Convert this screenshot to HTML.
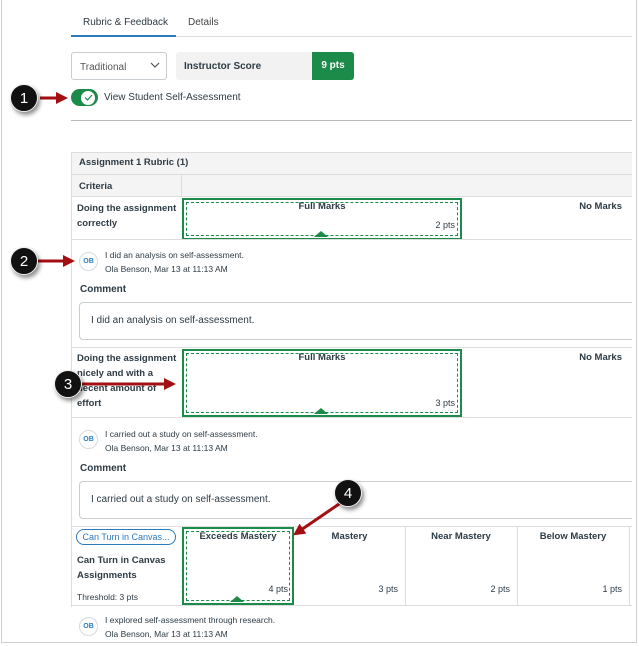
<!DOCTYPE html>
<html><head><meta charset="utf-8"><style>
*{box-sizing:border-box;margin:0;padding:0}
body{width:639px;height:646px;background:#fff;font-family:"Liberation Sans",sans-serif;color:#2d3b45;position:relative;overflow:hidden;font-size:10px}
.a{position:absolute}
.frame{left:1px;top:0;width:636px;height:643px;border:1px solid #cfcfcf;border-top:none}
.b{font-weight:bold}
.line{background:#ddd;height:1px}
.gbox{border:2px solid #1c8a48}
.gbox::after{content:"";position:absolute;left:2px;top:2px;right:2px;bottom:2px;border:1px dashed #1c8a48}
.tri{width:0;height:0;border-left:7px solid transparent;border-right:7px solid transparent;border-bottom:6px solid #1c8a48}
.av{width:19px;height:19px;border-radius:50%;border:1px solid #d5dbe0;color:#2b7abc;font-size:7px;font-weight:bold;text-align:center;line-height:17px}
.cb{border:1px solid #c7cdd1;border-right:none;border-radius:4px 0 0 4px;font-size:10px;padding:12px 0 0 11px}
.call{width:28px;height:28px;border-radius:50%;background:#111;color:#fff;font-size:15px;text-align:center;line-height:28px;box-shadow:2px 3px 4px rgba(0,0,0,.45);border:1.5px solid #eee}
.sm{font-size:8.5px}
</style></head><body>
<div class="a frame"></div>
<!-- tabs -->
<div class="a" style="left:83px;top:17px;font-size:10px">Rubric &amp; Feedback</div>
<div class="a" style="left:188px;top:17px;font-size:10px;color:#444">Details</div>
<div class="a line" style="left:71px;top:36px;width:561px"></div>
<div class="a" style="left:71px;top:35px;width:105px;height:2px;background:#2b7abc"></div>
<!-- controls -->
<div class="a" style="left:71px;top:52px;width:96px;height:28px;border:1px solid #c7cdd1;border-radius:3px;padding:9px 0 0 8px;color:#555">Traditional</div>
<svg class="a" style="left:150px;top:62px" width="10" height="7"><path d="M1 1 L5 5 L9 1" fill="none" stroke="#555" stroke-width="1.2"/></svg>
<div class="a b" style="left:176px;top:52px;width:136px;height:28px;background:#f2f2f2;border-radius:3px 0 0 3px;padding:9px 0 0 8px">Instructor Score</div>
<div class="a b" style="left:312px;top:52px;width:42px;height:28px;background:#1c8a48;color:#fff;border-radius:0 3px 3px 0;text-align:center;line-height:28px">9 pts</div>
<div class="a" style="left:71px;top:89px;width:27px;height:17px;border-radius:9px;background:#1c8a48"></div>
<div class="a" style="left:80px;top:89.5px;width:16px;height:16px;border-radius:50%;background:#fff;border:1px solid #1c8a48"></div>
<svg class="a" style="left:84px;top:94px" width="9" height="7"><path d="M1 3.5 L3.5 6 L8 1" fill="none" stroke="#1c8a48" stroke-width="1.2"/></svg>
<div class="a" style="left:104px;top:92px">View Student Self-Assessment</div>
<div class="a" style="left:71px;top:120px;width:561px;height:1px;background:#bbb"></div>
<!-- table -->
<div class="a" style="left:71px;top:152px;width:561px;height:45px;background:#f4f4f4;border:1px solid #ddd;border-right:none"></div>
<div class="a line" style="left:71px;top:174px;width:561px"></div>
<div class="a" style="left:181px;top:174px;width:1px;height:23px;background:#ddd"></div>
<div class="a b" style="left:79px;top:157px;font-size:9.5px">Assignment 1 Rubric (1)</div>
<div class="a b" style="left:79px;top:181px;font-size:9.5px">Criteria</div>
<div class="a" style="left:71px;top:197px;width:1px;height:410px;background:#ddd"></div>
<!-- row1 -->
<div class="a b" style="left:77px;top:201px;line-height:15px;font-size:9.5px">Doing the assignment<br>correctly</div>
<div class="a gbox" style="left:182px;top:198px;width:280px;height:42px"></div>
<div class="a b" style="left:182px;top:201px;width:280px;text-align:center;font-size:9.5px">Full Marks</div>
<div class="a" style="left:420px;top:220px;width:35px;text-align:right;font-size:9px">2 pts</div>
<div class="a tri" style="left:314px;top:231px"></div>
<div class="a b" style="left:540px;top:201px;width:82px;text-align:right;font-size:9.5px">No Marks</div>
<div class="a line" style="left:71px;top:239px;width:561px"></div>
<!-- comment 1 -->
<div class="a av" style="left:79px;top:252px">OB</div>
<div class="a sm" style="left:105px;top:250px">I did an analysis on self-assessment.</div>
<div class="a sm" style="left:105px;top:264px">Ola Benson, Mar 13 at 11:13 AM</div>
<div class="a b" style="left:80px;top:284px">Comment</div>
<div class="a cb" style="left:79px;top:302px;width:553px;height:38px">I did an analysis on self-assessment.</div>
<div class="a line" style="left:71px;top:347px;width:561px"></div>
<!-- row2 -->
<div class="a b" style="left:77px;top:351px;line-height:15px;font-size:9.5px">Doing the assignment<br>nicely and with a<br>decent amount of<br>effort</div>
<div class="a gbox" style="left:182px;top:349px;width:280px;height:68px"></div>
<div class="a b" style="left:182px;top:352px;width:280px;text-align:center;font-size:9.5px">Full Marks</div>
<div class="a" style="left:420px;top:398px;width:35px;text-align:right;font-size:9px">3 pts</div>
<div class="a tri" style="left:314px;top:408px"></div>
<div class="a b" style="left:540px;top:352px;width:82px;text-align:right;font-size:9.5px">No Marks</div>
<div class="a line" style="left:71px;top:417px;width:561px"></div>
<!-- comment 2 -->
<div class="a av" style="left:79px;top:430px">OB</div>
<div class="a sm" style="left:105px;top:429px">I carried out a study on self-assessment.</div>
<div class="a sm" style="left:105px;top:443px">Ola Benson, Mar 13 at 11:13 AM</div>
<div class="a b" style="left:80px;top:463px">Comment</div>
<div class="a cb" style="left:79px;top:481px;width:553px;height:38px">I carried out a study on self-assessment.</div>
<div class="a line" style="left:71px;top:526px;width:561px"></div>
<!-- row3 -->
<div class="a" style="left:76px;top:529px;width:100px;height:16px;border:1px solid #2b7abc;border-radius:8px;color:#2b7abc;font-size:9px;text-align:center;line-height:14px">Can Turn in Canvas...</div>
<div class="a b" style="left:77px;top:553px;line-height:15px;font-size:9.5px">Can Turn in Canvas<br>Assignments</div>
<div class="a" style="left:77px;top:592px;font-size:8.5px">Threshold: 3 pts</div>
<div class="a gbox" style="left:182px;top:527px;width:112px;height:78px"></div>
<div class="a b" style="left:182px;top:531px;width:112px;text-align:center;font-size:9.5px">Exceeds Mastery</div>
<div class="a" style="left:250px;top:584px;width:38px;text-align:right;font-size:9px">4 pts</div>
<div class="a tri" style="left:230px;top:596px"></div>
<div class="a" style="left:405px;top:527px;width:1px;height:78px;background:#ddd"></div>
<div class="a" style="left:517px;top:527px;width:1px;height:78px;background:#ddd"></div>
<div class="a" style="left:629px;top:527px;width:1px;height:78px;background:#ddd"></div>
<div class="a b" style="left:294px;top:531px;width:111px;text-align:center;font-size:9.5px">Mastery</div>
<div class="a b" style="left:405px;top:531px;width:112px;text-align:center;font-size:9.5px">Near Mastery</div>
<div class="a b" style="left:517px;top:531px;width:112px;text-align:center;font-size:9.5px">Below Mastery</div>
<div class="a" style="left:360px;top:584px;width:38px;text-align:right;font-size:9px">3 pts</div>
<div class="a" style="left:472px;top:584px;width:38px;text-align:right;font-size:9px">2 pts</div>
<div class="a" style="left:584px;top:584px;width:38px;text-align:right;font-size:9px">1 pts</div>
<div class="a line" style="left:71px;top:605px;width:561px"></div>
<!-- comment 3 -->
<div class="a av" style="left:79px;top:617px">OB</div>
<div class="a sm" style="left:105px;top:615px">I explored self-assessment through research.</div>
<div class="a sm" style="left:105px;top:629px">Ola Benson, Mar 13 at 11:13 AM</div>
<!-- callouts -->
<svg class="a" style="left:0;top:0" width="639" height="646">
<defs><marker id="m" markerWidth="4" markerHeight="4" refX="2" refY="2" orient="auto"><path d="M0 0 L4 2 L0 4Z" fill="#a30f12"/></marker></defs>
<g stroke="#a30f12" stroke-width="3" fill="none" marker-end="url(#m)">
<line x1="40" y1="98" x2="62" y2="98"/>
<line x1="38" y1="261" x2="69" y2="261"/>
<line x1="78" y1="384" x2="170" y2="384"/>
<line x1="342" y1="502" x2="298" y2="532"/>
</g></svg>
<div class="a call" style="left:10px;top:84px">1</div>
<div class="a call" style="left:10px;top:247px">2</div>
<div class="a call" style="left:54px;top:370px">3</div>
<div class="a call" style="left:334px;top:479px">4</div>
</body></html>
